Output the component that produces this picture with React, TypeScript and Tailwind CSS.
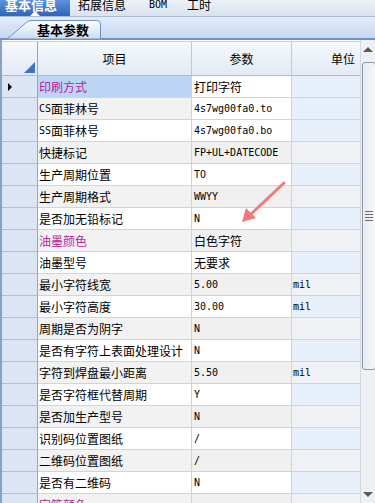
import React from "react";

type Row = {
  item: string;
  value: string;
  unit?: string;
  pink?: boolean;
  white?: boolean;
};

const rows: Row[] = [
  { item: "印刷方式", value: "打印字符", pink: true },
  { item: "CS面菲林号", value: "4s7wg00fa0.to", white: true },
  { item: "SS面菲林号", value: "4s7wg00fa0.bo" },
  { item: "快捷标记", value: "FP+UL+DATECODE" },
  { item: "生产周期位置", value: "TO" },
  { item: "生产周期格式", value: "WWYY" },
  { item: "是否加无铅标记", value: "N" },
  { item: "油墨颜色", value: "白色字符", pink: true },
  { item: "油墨型号", value: "无要求" },
  { item: "最小字符线宽", value: "5.00", unit: "mil" },
  { item: "最小字符高度", value: "30.00", unit: "mil" },
  { item: "周期是否为阴字", value: "N" },
  { item: "是否有字符上表面处理设计", value: "N" },
  { item: "字符到焊盘最小距离", value: "5.50", unit: "mil" },
  { item: "是否字符框代替周期", value: "Y" },
  { item: "是否加生产型号", value: "N" },
  { item: "识别码位置图纸", value: "/" },
  { item: "二维码位置图纸", value: "/" },
  { item: "是否有二维码", value: "N" },
  { item: "字符颜色", value: "", pink: true },
];

// ascii runs get a half-width mono face, like the old SimSun grid
function Txt({ s }: { s: string }) {
  const parts = s.split(/([\x20-\x7e]+)/).filter(Boolean);
  return (
    <>
      {parts.map((p, i) =>
        /^[\x20-\x7e]+$/.test(p) ? (
          <span key={i} className="font-['DejaVu_Sans_Mono',monospace] text-[10px]">
            {p}
          </span>
        ) : (
          <span key={i}>{p}</span>
        )
      )}
    </>
  );
}

function TopTabs() {
  return (
    <div className="h-[17px] shrink-0 flex items-start bg-gradient-to-b from-[#eef2f8] to-[#d9e2ee] border-b border-[#a9bad2] overflow-hidden">
      <div className="relative w-[70px] h-[16px] bg-gradient-to-b from-[#5b93de] to-[#2f64b9] text-white font-bold text-[13px] leading-[10px] pl-[5px] overflow-hidden">
        基本信息
        <div className="absolute left-[30px] bottom-0 w-0 h-0 border-l-[5px] border-r-[5px] border-b-[5px] border-l-transparent border-r-transparent border-b-white" />
      </div>
      <div className="text-[12px] leading-[10px] text-black ml-[8px]">拓展信息</div>
      <div className="font-['DejaVu_Sans_Mono',monospace] text-[10px] leading-[10px] ml-[23px]">BOM</div>
      <div className="text-[12px] leading-[10px] ml-[20px]">工时</div>
    </div>
  );
}

function SubTabs() {
  return (
    <div className="h-[23px] shrink-0 relative bg-gradient-to-b from-[#e3ecf9] to-[#c6d9f3] border-b-2 border-[#7191c2]">
      <div className="absolute left-0 top-[3px] w-[104px] h-[19px]">
        <svg width="104" height="19" className="absolute inset-0">
          <defs>
            <linearGradient id="tg" x1="0" y1="0" x2="0" y2="1">
              <stop offset="0" stopColor="#ffffff" />
              <stop offset="1" stopColor="#c9dcf5" />
            </linearGradient>
          </defs>
          <path
            d="M7 19 L27 2 Q29 0.5 32 0.5 L97 0.5 Q100.5 0.5 100.5 4 L100.5 19 Z"
            fill="url(#tg)"
            stroke="#6f90c0"
            strokeWidth="1"
          />
        </svg>
        <div className="absolute left-[37px] top-[3px] font-bold text-[13px] leading-[14px] text-black">
          基本参数
        </div>
      </div>
    </div>
  );
}

function Header() {
  return (
    <div className="flex h-[35px] shrink-0 bg-gradient-to-b from-[#f6f9fd] to-[#e2eaf5] border-t border-[#c4d3e9] border-b border-b-[#a8bddc]">
      <div className="relative w-[36px] shrink-0 border-r border-[#8ea7c9]">
        <div className="absolute right-[2px] bottom-[2px] w-0 h-0 border-l-[11px] border-l-transparent [border-bottom:11px_solid_#3e72c6]" />
      </div>
      <div className="w-[154px] shrink-0 border-r border-[#b8cae3] flex items-center justify-center">项目</div>
      <div className="w-[100px] shrink-0 border-r border-[#b8cae3] flex items-center justify-center">参数</div>
      <div className="flex-1 flex items-center pl-[39px]">单位</div>
    </div>
  );
}

function GridRow({ r, i }: { r: Row; i: number }) {
  const odd = i % 2 === 1;
  const itemBg = i === 0 ? "bg-[#bcd5f4]" : odd ? "bg-[#f2f2f2]" : "bg-white";
  const grey = odd && !r.white;
  const valBg = grey ? "bg-[#f0f0f0]" : "bg-white";
  const unitBg = grey ? "bg-[#eff1f5]" : "bg-[#e7effb]";
  return (
    <div className="flex h-[22px] shrink-0">
      <div className="relative w-[36px] shrink-0 bg-[#dbe5f3] border-r border-[#8ea7c9] border-b border-b-[#aec2df] flex items-center">
        {i === 0 && (
          <div className="ml-[6px] w-0 h-0 border-t-[4px] border-b-[4px] border-l-[4px] border-t-transparent border-b-transparent border-l-black" />
        )}
      </div>
      <div
        className={`w-[154px] shrink-0 ${itemBg} border-r border-[#c3d4ec] border-b border-b-[#c6d6ee] flex items-center pl-[1px] whitespace-nowrap ${
          r.pink ? "text-[#b9239a]" : "text-black"
        }`}
      >
        <Txt s={r.item} />
      </div>
      <div className={`w-[100px] shrink-0 ${valBg} border-r border-[#c3d4ec] border-b border-b-[#c6d6ee] flex items-center pl-[2px] whitespace-nowrap`}>
        <Txt s={r.value} />
      </div>
      <div className={`flex-1 ${unitBg} border-b border-[#c6d6ee] flex items-center pl-[1px]`}>
        {r.unit && <Txt s={r.unit} />}
      </div>
    </div>
  );
}

function ScrollBar() {
  return (
    <div className="w-[15px] shrink-0 bg-[#eef0f3] border-l border-[#d2d8e2] flex flex-col items-center pt-[7px]">
      <div className="w-0 h-0 border-l-[5px] border-r-[5px] border-b-[5px] border-l-transparent border-r-transparent border-b-[#5a5a5a]" />
      <div className="mt-[10px] w-[14px] ml-[1px] h-[308px] rounded-[3px] border border-[#8d99aa] bg-gradient-to-r from-[#e9ecf1] to-[#f4f5f8] flex flex-col items-center justify-center gap-[2px]">
        <div className="w-[8px] h-px bg-[#6d6d6d]" />
        <div className="w-[8px] h-px bg-[#6d6d6d]" />
        <div className="w-[8px] h-px bg-[#6d6d6d]" />
        <div className="w-[8px] h-px bg-[#6d6d6d]" />
      </div>
      <div className="mt-auto mb-[6px] w-0 h-0 border-l-[5px] border-r-[5px] border-t-[5px] border-l-transparent border-r-transparent border-t-[#5a5a5a]" />
    </div>
  );
}

export default function App() {
  return (
    <div className="relative w-[375px] h-[503px] overflow-hidden bg-white font-['Noto_Sans_CJK_SC',sans-serif] text-[12px] leading-none text-black">
      <TopTabs />
      <SubTabs />
      <div className="flex h-[463px] border-l-2 border-[#8aa2c6]">
        <div className="flex-1 flex flex-col overflow-hidden">
          <div className="h-[1px] shrink-0 bg-white" />
          <Header />
          {rows.map((r, i) => (
            <GridRow key={i} r={r} i={i} />
          ))}
        </div>
        <ScrollBar />
      </div>

      {/* annotation arrow drawn over the grid */}
      <svg className="absolute left-0 top-0 pointer-events-none" width="375" height="503">
        <line x1="284" y1="183" x2="250" y2="215" stroke="#f07a7a" strokeWidth="3" strokeLinecap="round" />
        <polygon points="242,222 246,208 256,218" fill="#f07a7a" />
      </svg>
    </div>
  );
}
